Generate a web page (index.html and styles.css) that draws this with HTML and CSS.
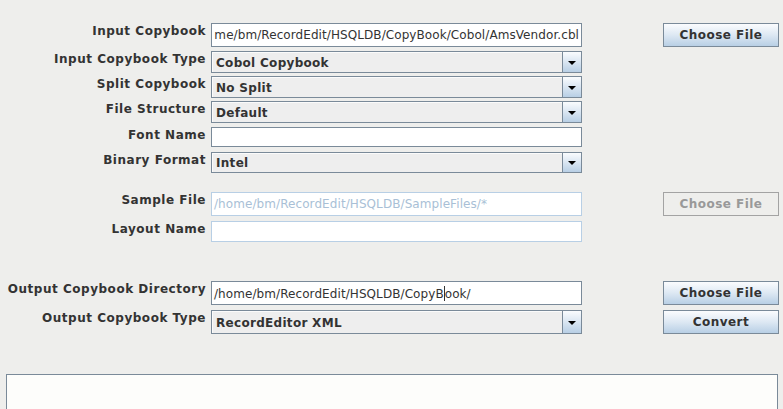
FILE: index.html
```html
<!DOCTYPE html>
<html>
<head>
<meta charset="utf-8">
<link rel="stylesheet" href="styles.css">
</head>
<body>
<div class="form">
  <div class="row h24">
    <div class="lbl">Input Copybook</div>
    <div class="field text scrolled"><span class="val">me/bm/RecordEdit/HSQLDB/CopyBook/Cobol/AmsVendor.cbl</span></div>
    <div class="btn">Choose File</div>
  </div>
  <div class="row h22 g4">
    <div class="lbl">Input Copybook Type</div>
    <div class="field combo"><span class="cval">Cobol Copybook</span><span class="arrow"><i></i></span></div>
  </div>
  <div class="row h22 g3">
    <div class="lbl">Split Copybook</div>
    <div class="field combo"><span class="cval">No Split</span><span class="arrow"><i></i></span></div>
  </div>
  <div class="row h22 g3">
    <div class="lbl">File Structure</div>
    <div class="field combo"><span class="cval">Default</span><span class="arrow"><i></i></span></div>
  </div>
  <div class="row h20 g4">
    <div class="lbl">Font Name</div>
    <div class="field text"></div>
  </div>
  <div class="row h21 g5">
    <div class="lbl">Binary Format</div>
    <div class="field combo"><span class="cval">Intel</span><span class="arrow"><i></i></span></div>
  </div>
  <div class="row h24 g19">
    <div class="lbl">Sample File</div>
    <div class="field text disabled"><span class="val">/home/bm/RecordEdit/HSQLDB/SampleFiles/*</span></div>
    <div class="btn off">Choose File</div>
  </div>
  <div class="row h21 g5">
    <div class="lbl">Layout Name</div>
    <div class="field text disabled"></div>
  </div>
  <div class="row h24 g39">
    <div class="lbl">Output Copybook Directory</div>
    <div class="field text"><span class="val">/home/bm/RecordEdit/HSQLDB/CopyB<span class="caret"></span>ook/</span></div>
    <div class="btn">Choose File</div>
  </div>
  <div class="row h24 g5">
    <div class="lbl">Output Copybook Type</div>
    <div class="field combo"><span class="cval">RecordEditor XML</span><span class="arrow"><i></i></span></div>
    <div class="btn">Convert</div>
  </div>
</div>
<div class="log"></div>
</body>
</html>
```

FILE: styles.css
```css
html, body {
  margin: 0;
  padding: 0;
  background: #eeeeec;
  overflow: hidden;
  height: 409px;
}
body {
  font-family: "DejaVu Sans", sans-serif;
  font-size: 12px;
  color: #333333;
}
.form {
  display: flex;
  flex-direction: column;
  padding-top: 23px;
}
.row {
  display: flex;
  align-items: stretch;
}
.h24 { height: 24px; }
.h22 { height: 22px; }
.h21 { height: 21px; }
.h20 { height: 20px; }
.g3 { margin-top: 3px; }
.g4 { margin-top: 4px; }
.g5 { margin-top: 5px; }
.g19 { margin-top: 19px; }
.g39 { margin-top: 39px; }

.lbl {
  width: 206px;
  margin-right: 5px;
  text-align: right;
  font-weight: bold;
  padding-top: 1px;
  line-height: 14px;
  white-space: nowrap;
  letter-spacing: 0.52px;
  flex: none;
}
.field {
  width: 371px;
  box-sizing: border-box;
  display: flex;
  align-items: center;
  overflow: hidden;
  flex: none;
}
.text {
  background: #ffffff;
  border: 1px solid #7a8a99;
  justify-content: flex-start;
  padding: 0 2px;
  letter-spacing: 0.08px;
}
.text.scrolled {
  justify-content: flex-end;
}
.text .val {
  white-space: nowrap;
  flex: none;
}
.text.disabled {
  border-color: #b8cfe5;
  color: #a9bfd6;
}
.caret {
  display: inline-block;
  width: 1px;
  height: 15px;
  background: #333;
  vertical-align: -3px;
}
.combo {
  border: 1px solid #7a8a99;
  background: #eeeeee;
  align-items: stretch;
}
.cval {
  flex: 1;
  display: flex;
  align-items: center;
  padding-left: 3px;
  font-weight: bold;
  letter-spacing: 0.3px;
  border-top: 1px solid #fbfbfb;
  border-left: 1px solid #fbfbfb;
}
.arrow {
  width: 18px;
  flex: none;
  border-left: 1px solid #7a8a99;
  background: linear-gradient(#fafcfe, #dde8f3 45%, #b8cfe5);
  display: flex;
  align-items: center;
  justify-content: center;
}
.arrow i {
  display: block;
  width: 0;
  height: 0;
  border-left: 4px solid transparent;
  border-right: 4px solid transparent;
  border-top: 4px solid #000;
  margin-top: 1px;
}
.btn {
  margin-left: 81px;
  width: 116px;
  flex: none;
  box-sizing: border-box;
  border: 1px solid #7a8a99;
  background: linear-gradient(#fbfcfe, #dde8f3 50%, #b8cfe5);
  font-weight: bold;
  letter-spacing: 0.45px;
  display: flex;
  align-items: center;
  justify-content: center;
  color: #333;
}
.btn.off {
  background: #eeeeec;
  border-color: #a3a3a3;
  color: #999999;
}
.log {
  margin: 40px 5px 0 6px;
  height: 35px;
  background: #fdfdfb;
  border: 1px solid #7a8a99;
  border-bottom: none;
}
```
